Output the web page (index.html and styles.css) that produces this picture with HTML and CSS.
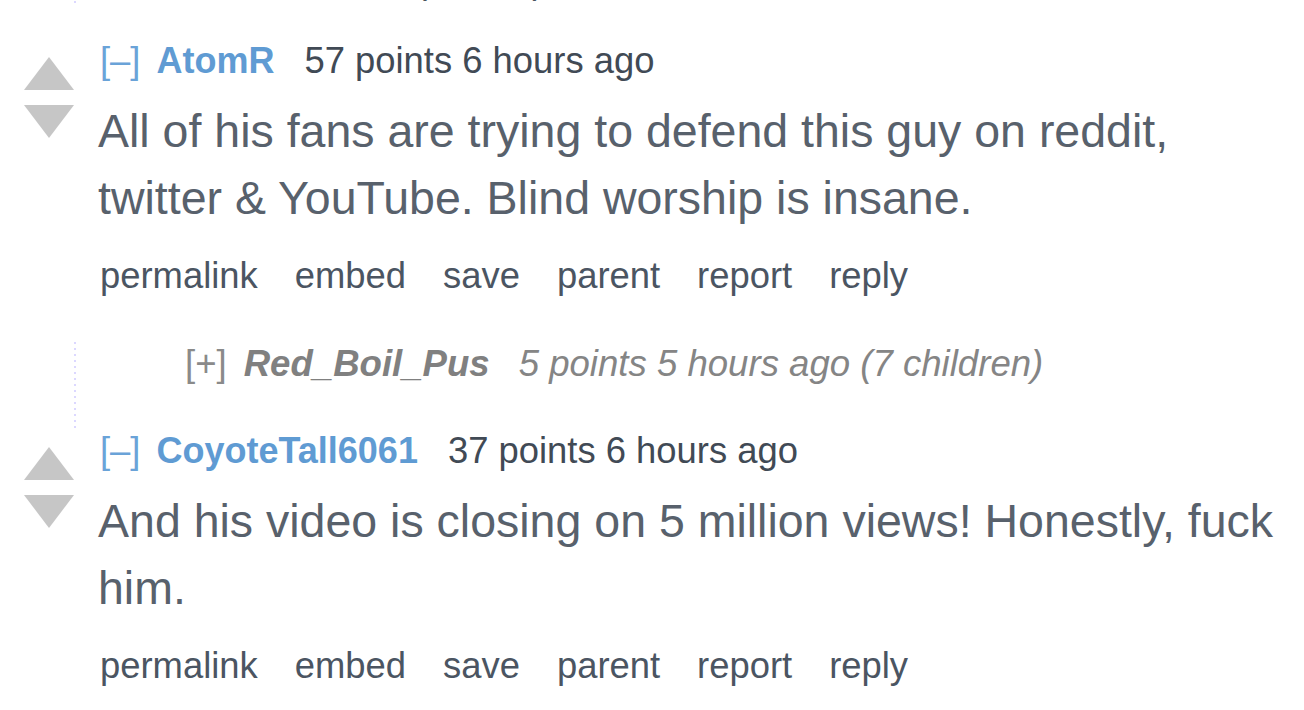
FILE: index.html
```html
<!DOCTYPE html>
<html lang="en">
<head>
<meta charset="utf-8">
<title>Comments</title>
<link rel="stylesheet" href="styles.css">
</head>
<body>
<div class="page">
  <div class="child child-top">
    <div class="tail-line"><span class="tail">(1 child)</span></div>
  </div>

  <div class="comment first">
    <div class="midcol">
      <span class="arrow up"></span>
      <span class="arrow down"></span>
    </div>
    <div class="entry">
      <p class="tagline"><span class="expand">[–]</span><span class="author">AtomR</span><span class="score">57 points 6 hours ago</span></p>
      <div class="md">All of his fans are trying to defend this guy on reddit, twitter &amp; YouTube. Blind worship is insane.</div>
      <ul class="flat-list">
        <li>permalink</li>
        <li>embed</li>
        <li>save</li>
        <li>parent</li>
        <li>report</li>
        <li>reply</li>
      </ul>
    </div>
  </div>

  <div class="child">
    <div class="collapsed">
      <span class="expand">[+]</span><span class="author">Red_Boil_Pus</span><span class="score">5 points 5 hours ago (7 children)</span>
    </div>
  </div>

  <div class="comment">
    <div class="midcol">
      <span class="arrow up"></span>
      <span class="arrow down"></span>
    </div>
    <div class="entry">
      <p class="tagline"><span class="expand">[–]</span><span class="author">CoyoteTall6061</span><span class="score">37 points 6 hours ago</span></p>
      <div class="md">And his video is closing on 5 million views! Honestly, fuck him.</div>
      <ul class="flat-list">
        <li>permalink</li>
        <li>embed</li>
        <li>save</li>
        <li>parent</li>
        <li>report</li>
        <li>reply</li>
      </ul>
    </div>
  </div>
</div>
</body>
</html>
```

FILE: styles.css
```css
html, body {
  margin: 0;
  padding: 0;
  background: #ffffff;
}

body {
  font-family: "Liberation Sans", Arial, sans-serif;
  overflow: hidden;
}

.page {
  margin-top: -41px;
  width: 1304px;
}

.child {
  margin-left: 74px;
  padding-left: 2px;
  background-image: repeating-linear-gradient(to bottom, #dcd8ff 0, #dcd8ff 2px, transparent 2px, transparent 6px);
  background-size: 2px 100%;
  background-repeat: no-repeat;
  background-position: left top;
}

.child-top {
  padding-bottom: 2px;
}

.tail-line {
  font-size: 36.4px;
  line-height: 44px;
  height: 44px;
  padding-left: 339px;
  color: #4a535e;
}

.comment {
  display: flex;
  align-items: flex-start;
}

.comment.first {
  margin-top: 34px;
}

.midcol {
  width: 50px;
  margin-left: 24px;
  margin-right: 24px;
  padding-top: 18px;
  display: flex;
  flex-direction: column;
  gap: 15px;
}

.arrow {
  display: block;
  width: 0;
  height: 0;
  border-left: 25px solid transparent;
  border-right: 25px solid transparent;
}

.arrow.up {
  border-bottom: 33px solid #c6c6c6;
}

.arrow.down {
  border-top: 33px solid #c6c6c6;
}

.entry {
  flex: 1;
  padding-right: 16px;
}

.tagline {
  margin: 0;
  font-size: 36.4px;
  line-height: 44px;
  color: #414a55;
  white-space: nowrap;
}

.tagline .expand {
  color: #6aa3d8;
  margin-left: 2px;
  margin-right: 16px;
}

.tagline .author {
  color: #5f9bd3;
  font-weight: bold;
  font-size: 36px;
  margin-right: 30px;
}

.md {
  margin-top: 15px;
  font-size: 46.5px;
  line-height: 67px;
  color: #58616c;
}

.flat-list {
  list-style: none;
  margin: 22px 0 0;
  padding: 0 0 0 2px;
  display: flex;
  gap: 37px;
  font-size: 36.4px;
  line-height: 44px;
  color: #4b5562;
}

.comment.first + .child {
  margin-top: 44px;
}

.child .collapsed {
  padding-left: 109px;
  padding-bottom: 43px;
  font-size: 36.6px;
  line-height: 44px;
  font-style: italic;
  color: #858585;
  white-space: nowrap;
}

.collapsed .expand {
  font-style: normal;
  color: #8a8a8a;
  margin-right: 17px;
}

.collapsed .author {
  font-weight: bold;
  color: #808080;
  margin-right: 29px;
}
```
